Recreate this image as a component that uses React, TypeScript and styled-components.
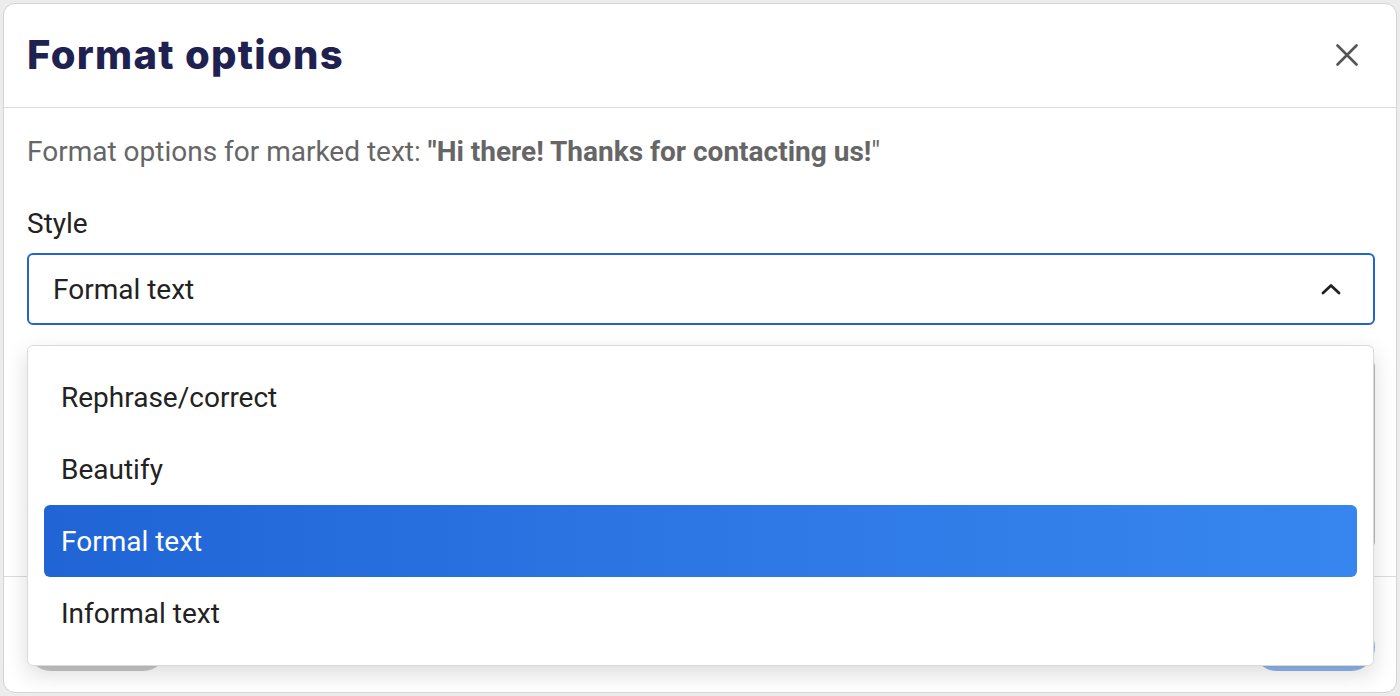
import React from "react";
import styled, { createGlobalStyle } from "styled-components";

const Global = createGlobalStyle`
  html, body { margin: 0; padding: 0; background: #ececec; }
  body { font-family: Roboto, "Noto Sans", Arial, sans-serif; }
  * { box-sizing: border-box; }
`;

const Page = styled.div`
  padding: 3px;
  height: 696px;
`;

const Modal = styled.div`
  background: #fff;
  border: 1px solid #d4d4d4;
  border-radius: 12px;
  height: 690px;
  display: flex;
  flex-direction: column;
  overflow: hidden;
`;

const Header = styled.div`
  height: 104px;
  display: flex;
  align-items: center;
  justify-content: space-between;
  padding: 0 29px 2px 23px;
  border-bottom: 1px solid #dcdcdc;
`;

const Title = styled.h1`
  margin: 0;
  font-family: Inter, "Open Sans", sans-serif;
  font-weight: 800;
  font-size: 40px;
  letter-spacing: 1.3px;
  color: #1f2150;
`;

const CloseButton = styled.button`
  width: 40px;
  height: 40px;
  border: none;
  background: none;
  padding: 0;
  display: flex;
  align-items: center;
  justify-content: center;
  cursor: pointer;
`;

const Body = styled.div`
  padding: 26px 21px 0 23px;
  display: flex;
  flex-direction: column;
`;

const Description = styled.p`
  margin: 0;
  font-size: 28px;
  line-height: 36px;
  color: #666;
  b { font-weight: 700; }
`;

const Label = styled.div`
  margin-top: 36px;
  margin-bottom: 11px;
  font-size: 28px;
  line-height: 36px;
  color: #222;
`;

const SelectWrap = styled.div`
  position: relative;
`;

const SelectBox = styled.div`
  height: 72px;
  border: 2px solid #2264d1;
  border-radius: 6px;
  display: flex;
  align-items: center;
  justify-content: space-between;
  padding: 0 32px 0 24px;
  font-size: 28px;
  color: #222;
`;

const Menu = styled.div`
  position: absolute;
  top: calc(100% + 20px);
  left: 0;
  right: 1px;
  background: #fff;
  border: 1px solid #dadada;
  border-radius: 6px;
  box-shadow: 0 8px 22px rgba(0, 0, 0, 0.14);
  padding: 15px 16px 16px;
  z-index: 10;
`;

const Item = styled.div<{ $active?: boolean }>`
  height: 72px;
  display: flex;
  align-items: center;
  padding: 0 17px;
  font-size: 28px;
  border-radius: 6px;
  color: ${(p) => (p.$active ? "#fff" : "#222")};
  background: ${(p) =>
    p.$active ? "linear-gradient(90deg, #2064d6 0%, #2d77e4 50%, #3786ef 100%)" : "transparent"};
`;

const TextArea = styled.div`
  margin-top: 35px;
  height: 188px;
  border: 1px solid #bdbdbd;
  border-radius: 6px;
`;

const Footer = styled.div`
  margin-top: 28px;
  border-top: 1px solid #dcdcdc;
  flex: 1;
  display: flex;
  justify-content: space-between;
  align-items: flex-end;
  padding: 0 21px 21px 23px;
`;

const Button = styled.button<{ $primary?: boolean }>`
  height: 48px;
  border-radius: 24px;
  border: none;
  font-family: Roboto, sans-serif;
  font-size: 20px;
  padding: 0 24px;
  min-width: ${(p) => (p.$primary ? "122px" : "140px")};
  color: ${(p) => (p.$primary ? "#fff" : "#333")};
  background: ${(p) => (p.$primary ? "#8fb5ea" : "#c9c9c9")};
`;

export default function App() {
  return (
    <>
      <Global />
      <Page>
        <Modal>
          <Header>
            <Title>Format options</Title>
            <CloseButton aria-label="Close">
              <svg width="22" height="22" viewBox="0 0 22 22">
                <path d="M1.5 1.5 L20.5 20.5 M20.5 1.5 L1.5 20.5" stroke="#555" strokeWidth="2.6" strokeLinecap="round" />
              </svg>
            </CloseButton>
          </Header>
          <Body>
            <Description>
              Format options for marked text: <b>"Hi there! Thanks for contacting us!</b>"
            </Description>
            <Label>Style</Label>
            <SelectWrap>
              <SelectBox>
                <span>Formal text</span>
                <svg width="20" height="12" viewBox="0 0 20 12">
                  <path d="M2 10 L10 2.5 L18 10" stroke="#222" strokeWidth="2.8" fill="none" strokeLinecap="round" strokeLinejoin="round" />
                </svg>
              </SelectBox>
              <Menu>
                <Item>Rephrase/correct</Item>
                <Item>Beautify</Item>
                <Item $active>Formal text</Item>
                <Item>Informal text</Item>
              </Menu>
            </SelectWrap>
            <TextArea />
          </Body>
          <Footer>
            <Button>Cancel</Button>
            <Button $primary>Apply</Button>
          </Footer>
        </Modal>
      </Page>
    </>
  );
}
